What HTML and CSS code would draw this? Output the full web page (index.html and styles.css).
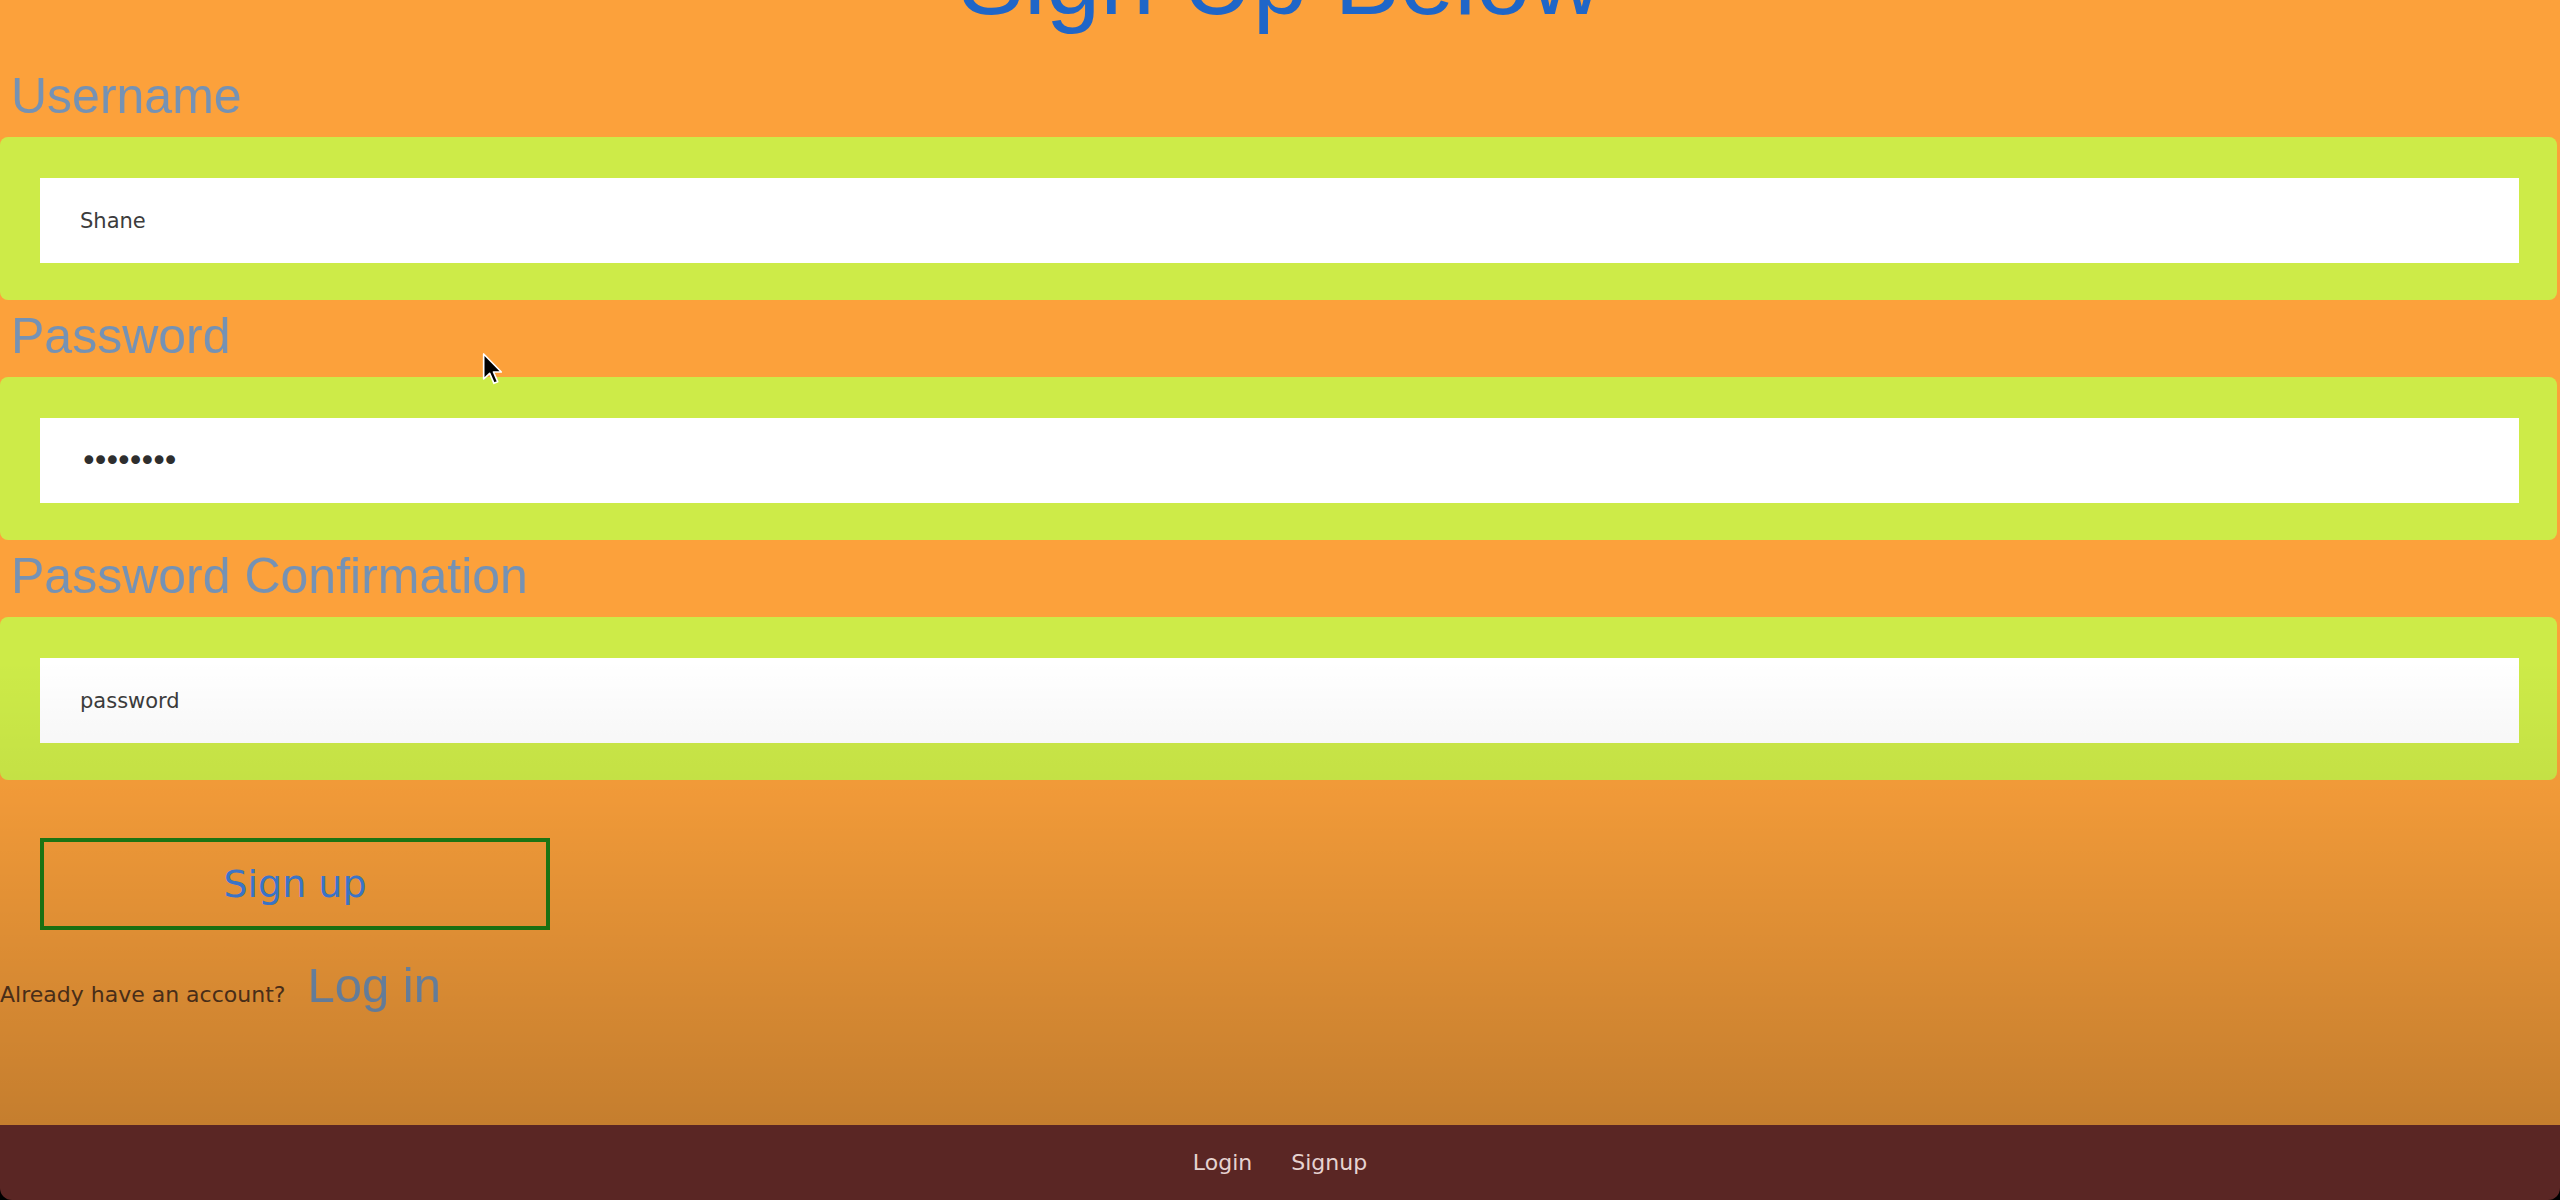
FILE: index.html
```html
<!DOCTYPE html>
<html lang="en">
<head>
<meta charset="utf-8">
<title>Sign Up</title>
<link rel="stylesheet" href="styles.css">
</head>
<body>
<main class="page">
  <h1 class="title">Sign Up Below</h1>
  <form class="signup-form">
    <label class="field-label" for="username">Username</label>
    <div class="band">
      <input class="field-input" id="username" type="text" value="Shane">
    </div>
    <label class="field-label" for="password">Password</label>
    <div class="band">
      <input class="field-input field-secret" id="password" type="password" value="password">
    </div>
    <label class="field-label" for="confirm">Password Confirmation</label>
    <div class="band">
      <input class="field-input" id="confirm" type="text" value="password">
    </div>
    <button class="signup-btn" type="button">Sign up</button>
    <p class="login-row"><span class="login-note">Already have an account?</span><a class="login-link" href="#">Log in</a></p>
  </form>
  <svg class="cursor" width="20" height="34" viewBox="0 0 12 20" aria-hidden="true">
    <path d="M1 1 L1 16 L4.6 12.6 L7.2 18.6 L9.4 17.6 L6.9 11.8 L11.6 11.8 Z" fill="#000" stroke="#fff" stroke-width="1" stroke-linejoin="round"/>
  </svg>
</main>
<footer class="footer">
  <a class="footer-link" href="#">Login</a>
  <a class="footer-link" href="#">Signup</a>
</footer>
</body>
</html>
```

FILE: styles.css
```css
html, body {
  margin: 0;
  padding: 0;
  height: 100%;
}

body {
  display: flex;
  flex-direction: column;
  min-height: 100vh;
  background: #000;
  font-family: "Liberation Sans", Arial, sans-serif;
  overflow: hidden;
}

.page {
  position: relative;
  flex: 1;
  background: #fca13b;
  overflow: hidden;
}

.page::after {
  content: "";
  position: absolute;
  inset: 0;
  pointer-events: none;
  background: linear-gradient(to bottom,
    rgba(0, 0, 0, 0) 0,
    rgba(0, 0, 0, 0) 660px,
    rgba(0, 0, 0, 0.05) 800px,
    rgba(0, 0, 0, 0.22) 100%);
}

.title {
  margin: -75px 0 25px;
  font-size: 98px;
  line-height: 110px;
  font-weight: normal;
  color: #1f66c8;
  text-align: center;
}

.signup-form {
  display: flex;
  flex-direction: column;
  align-items: stretch;
}

.field-label {
  display: block;
  margin: 8px 0 12px;
  padding-left: 11px;
  font-size: 50px;
  line-height: 57px;
  color: #7592b4;
}

.band {
  margin-right: 3px;
  padding: 41px 38px 37px 40px;
  background: #cdeb48;
  border-radius: 8px;
}

.field-input {
  display: block;
  box-sizing: border-box;
  width: 100%;
  height: 85px;
  margin: 0;
  padding: 0 0 0 40px;
  border: none;
  outline: none;
  background: #fff;
  font-family: "DejaVu Sans", Verdana, sans-serif;
  font-size: 21px;
  color: #3c3c3c;
}

.field-secret {
  font-size: 30px;
  letter-spacing: -6px;
  color: #2e2e2e;
}

.signup-btn {
  align-self: flex-start;
  box-sizing: border-box;
  width: 510px;
  height: 92px;
  margin: 58px 0 0 40px;
  padding: 0;
  border: 4px solid #1e7d14;
  background: transparent;
  font-family: "DejaVu Sans", Verdana, sans-serif;
  font-size: 38px;
  color: #4080dc;
  cursor: pointer;
}

.login-row {
  margin: 27px 0 0;
  line-height: 57px;
  white-space: nowrap;
}

.login-note {
  font-family: "DejaVu Sans", Verdana, sans-serif;
  font-size: 22px;
  color: #55351c;
}

.login-link {
  margin-left: 22px;
  font-size: 49px;
  color: #7592b4;
  text-decoration: none;
}

.cursor {
  position: absolute;
  left: 482px;
  top: 352px;
}

.footer {
  flex: 0 0 75px;
  display: flex;
  align-items: center;
  justify-content: center;
  gap: 39px;
  background: #5a2624;
  border-radius: 0 0 12px 12px;
}

.footer-link {
  font-family: "DejaVu Sans", Verdana, sans-serif;
  font-size: 22px;
  color: #e6d3d1;
  text-decoration: none;
}
```
